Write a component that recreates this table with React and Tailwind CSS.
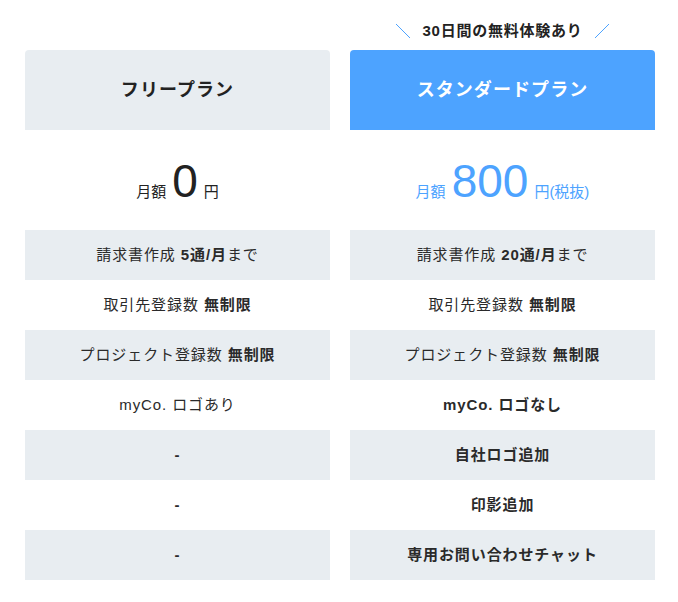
import React from "react";

const font = { fontFamily: '"Liberation Sans", "Noto Sans CJK JP", sans-serif' };

const freeRows = [
  <>請求書作成 <b>5通/月</b>まで</>,
  <>取引先登録数 <b>無制限</b></>,
  <>プロジェクト登録数 <b>無制限</b></>,
  <>myCo. ロゴあり</>,
  <b>-</b>,
  <b>-</b>,
  <b>-</b>,
];

const standardRows = [
  <>請求書作成 <b>20通/月</b>まで</>,
  <>取引先登録数 <b>無制限</b></>,
  <>プロジェクト登録数 <b>無制限</b></>,
  <b>myCo. ロゴなし</b>,
  <b>自社ロゴ追加</b>,
  <b>印影追加</b>,
  <b>専用お問い合わせチャット</b>,
];

const Slash = ({ flip }) => (
  <svg width="16" height="16" viewBox="0 0 16 16" className="shrink-0">
    <line
      x1={flip ? 15 : 1}
      y1="1"
      x2={flip ? 1 : 15}
      y2="15"
      stroke="#4da3ff"
      strokeWidth="1"
    />
  </svg>
);

const PlanColumn = ({ label, title, featured, price, unit, rows }) => {
  const accent = featured ? "text-[#4da3ff]" : "text-[#222]";
  return (
    <div className="w-[305px] flex flex-col">
      {/* trial label */}
      <div className="h-[50px] flex items-center justify-center gap-3 pt-[12px]">
        {label && (
          <>
            <Slash />
            <span className="text-[15px] font-bold tracking-[0.05em] text-[#222]">{label}</span>
            <Slash flip />
          </>
        )}
      </div>

      {/* plan title */}
      <div
        className={`h-[80px] rounded-t-[4px] flex items-center justify-center text-[18px] font-bold tracking-[0.06em] ${
          featured ? "bg-[#4da3ff] text-white" : "bg-[#e8edf1] text-[#222]"
        }`}
      >
        {title}
      </div>

      {/* price */}
      <div className={`h-[100px] flex items-center justify-center ${accent}`}>
        <div className="flex items-baseline pt-[2px]">
          <span className="text-[15px]">月額</span>
          <span className="text-[46px] leading-none mx-[6px]">{price}</span>
          <span className="text-[15px]">{unit}</span>
        </div>
      </div>

      {/* features */}
      {rows.map((row, i) => (
        <div
          key={i}
          className={`h-[50px] flex items-center justify-center text-[15px] tracking-[0.06em] text-[#2a2a2a] ${
            i % 2 === 0 ? "bg-[#e8edf1]" : "bg-white"
          }`}
        >
          <span>{row}</span>
        </div>
      ))}
    </div>
  );
};

export default function App() {
  return (
    <div className="min-h-[602px] bg-white pl-[25px]" style={font}>
      <div className="flex gap-[20px]">
        <PlanColumn title="フリープラン" price="0" unit="円" rows={freeRows} />
        <PlanColumn
          featured
          label="30日間の無料体験あり"
          title="スタンダードプラン"
          price="800"
          unit="円(税抜)"
          rows={standardRows}
        />
      </div>
    </div>
  );
}
